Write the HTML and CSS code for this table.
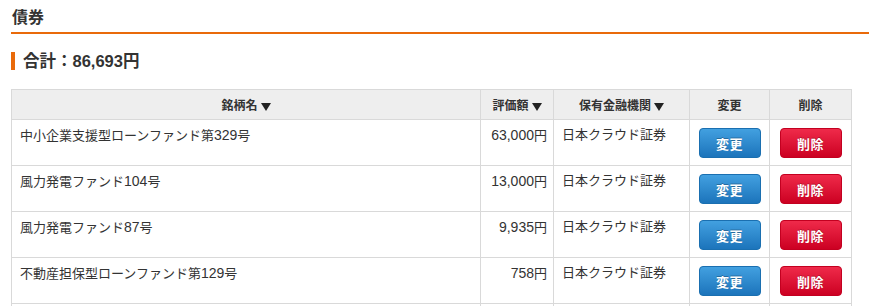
FILE: index.html
```html
<!DOCTYPE html>
<html lang="ja">
<head>
<meta charset="utf-8">
<link rel="stylesheet" href="styles.css">
</head>
<body>
<div class="page">
  <h2 class="title">債券</h2>
  <div class="total">合計：86,693円</div>
  <table class="list">
    <thead>
      <tr>
        <th class="c-name">銘柄名<span class="arrow"></span></th>
        <th class="c-val">評価額<span class="arrow"></span></th>
        <th class="c-inst">保有金融機関<span class="arrow"></span></th>
        <th class="c-btn1">変更</th>
        <th class="c-btn2">削除</th>
      </tr>
    </thead>
    <tbody>
      <tr>
        <td>中小企業支援型ローンファンド第<span class="d">329</span>号</td>
        <td class="num"><span class="d">63,000</span>円</td>
        <td>日本クラウド証券</td>
        <td class="act"><button class="btn btn-edit">変更</button></td>
        <td class="act"><button class="btn btn-del">削除</button></td>
      </tr>
      <tr>
        <td>風力発電ファンド<span class="d">104</span>号</td>
        <td class="num"><span class="d">13,000</span>円</td>
        <td>日本クラウド証券</td>
        <td class="act"><button class="btn btn-edit">変更</button></td>
        <td class="act"><button class="btn btn-del">削除</button></td>
      </tr>
      <tr>
        <td>風力発電ファンド<span class="d">87</span>号</td>
        <td class="num"><span class="d">9,935</span>円</td>
        <td>日本クラウド証券</td>
        <td class="act"><button class="btn btn-edit">変更</button></td>
        <td class="act"><button class="btn btn-del">削除</button></td>
      </tr>
      <tr>
        <td>不動産担保型ローンファンド第<span class="d">129</span>号</td>
        <td class="num"><span class="d">758</span>円</td>
        <td>日本クラウド証券</td>
        <td class="act"><button class="btn btn-edit">変更</button></td>
        <td class="act"><button class="btn btn-del">削除</button></td>
      </tr>
      <tr>
        <td>&nbsp;</td>
        <td class="num"></td>
        <td></td>
        <td class="act"></td>
        <td class="act"></td>
      </tr>
    </tbody>
  </table>
</div>
</body>
</html>
```
FILE: styles.css
```css
html, body {
  margin: 0;
  padding: 0;
  background: #fff;
}
body {
  font-family: "Liberation Sans", "Noto Sans CJK JP", sans-serif;
  color: #333;
  overflow: hidden;
}
.page {
  padding-left: 11px;
}
.title {
  margin: 0;
  padding: 8px 0 0 1px;
  height: 24px;
  font-size: 16px;
  line-height: 20px;
  font-weight: bold;
  color: #333;
  border-bottom: 2px solid #e96a0a;
}
.total {
  margin-top: 18px;
  height: 18px;
  line-height: 18px;
  border-left: 4px solid #e96a0a;
  padding-left: 8px;
  font-size: 16.5px;
  font-weight: bold;
  color: #333;
}
.list {
  margin-top: 19px;
  border-collapse: collapse;
  font-size: 13px;
  table-layout: fixed;
}
.list th, .list td {
  border: 1px solid #d9d9d9;
}
.list th {
  background: #eeeeee;
  height: 29px;
  padding: 0;
  font-size: 12px;
  font-weight: bold;
  text-align: center;
  vertical-align: middle;
  color: #333;
}
.arrow {
  display: inline-block;
  width: 0;
  height: 0;
  margin-left: 3px;
  border-left: 5px solid transparent;
  border-right: 5px solid transparent;
  border-top: 8px solid #222;
  vertical-align: -1px;
}
.c-name { width: 468px; }
.c-val { width: 72px; }
.c-inst { width: 135px; }
.c-btn1 { width: 79px; }
.c-btn2 { width: 81px; }
.list td {
  height: 46px;
  padding: 7px 8px 0 8px;
  vertical-align: top;
  box-sizing: border-box;
  line-height: 16px;
  color: #333;
}
.d {
  font-size: 14px;
}
.list td.num {
  text-align: right;
  padding-right: 6px;
}
.list td.act {
  text-align: center;
  padding: 8px 0 0 0;
}
.btn {
  display: inline-block;
  width: 62px;
  height: 30px;
  border-radius: 4px;
  font-family: "Liberation Sans", "Noto Sans CJK JP", sans-serif;
  font-size: 13px;
  font-weight: bold;
  color: #fff;
  text-shadow: 0 -1px 0 rgba(0,0,0,0.25);
  cursor: pointer;
  padding: 0;
  letter-spacing: 0.5px;
}
.btn-edit {
  border: 1px solid #1a6fb0;
  background: linear-gradient(#42a0e0, #1c74bb);
}
.btn-del {
  border: 1px solid #c30020;
  background: linear-gradient(#ef2a4a, #cc0022);
}
```
